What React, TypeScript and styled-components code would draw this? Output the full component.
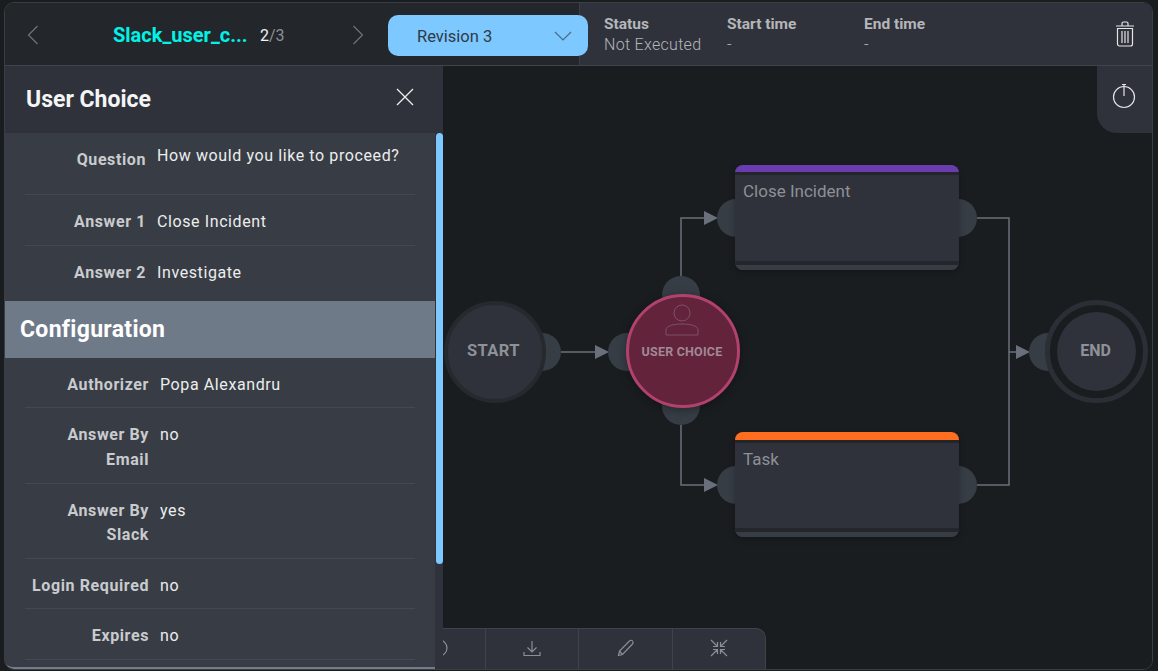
import React from 'react';
import styled, { createGlobalStyle } from 'styled-components';

const GlobalStyle = createGlobalStyle`
    html, body {
        margin: 0;
        padding: 0;
        height: 100%;
        background: #1a1d20;
        overflow: hidden;
        font-family: Roboto, "Liberation Sans", sans-serif;
    }
`;

const Frame = styled.div`
    box-sizing: border-box;
    margin: 2px 0 0 4px;
    width: 1149px;
    height: 668px;
    border: 1px solid #3a3e45;
    border-radius: 10px;
    overflow: hidden;
    display: flex;
    flex-direction: column;
    background: #1a1d20;
`;

const Header = styled.div`
    flex: none;
    display: flex;
    height: 63px;
    box-sizing: border-box;
    border-bottom: 1px solid #3f434b;
`;

const HeaderLeft = styled.div`
    flex: none;
    width: 575px;
    background: #23262b;
    border-right: 1px solid #3a3e45;
    box-sizing: border-box;
    display: flex;
    align-items: center;
    padding: 2px 0 0 22px;
`;

const HeaderRight = styled.div`
    flex: 1;
    background: #2f323a;
    display: flex;
    align-items: flex-start;
    padding: 11px 17px 0 24px;
`;

const Chevron = styled.svg`
    flex: none;
    display: block;
`;

const Pipeline = styled.div`
    flex: none;
    width: 302px;
    display: flex;
    align-items: center;
    margin-left: 11px;
    padding-left: 63px;
    box-sizing: border-box;
    white-space: nowrap;
`;

const PipelineName = styled.span`
    color: #00f3e6;
    font-size: 20px;
    font-weight: 700;
    width: 147px;
`;

const Counter = styled.span`
    color: #8c9096;
    font-size: 16px;
`;

const CounterCurrent = styled.span`
    color: #f2f2f2;
`;

const RevisionButton = styled.div`
    flex: none;
    box-sizing: border-box;
    width: 200px;
    height: 41px;
    margin-left: 24px;
    margin-top: 1px;
    padding: 1px 16px 0 29px;
    border-radius: 10px;
    background: #7cc8ff;
    color: #2f3a45;
    font-size: 16.5px;
    display: flex;
    align-items: center;
    justify-content: space-between;
    position: relative;
    z-index: 2;
`;

const StatusColumn = styled.div<{ $width: number }>`
    width: ${p => p.$width}px;
    display: flex;
    flex-direction: column;
    color: #b4b6ba;
`;

const StatusLabel = styled.span`
    font-size: 15.5px;
    font-weight: 700;
    line-height: 20px;
`;

const StatusValue = styled.span`
    font-size: 16px;
    font-weight: 300;
    line-height: 21px;
    letter-spacing: 0.3px;
`;

const TrashButton = styled.div`
    margin-left: auto;
    margin-top: 7px;
`;

const Main = styled.div`
    flex: 1;
    display: flex;
    min-height: 0;
`;

const Panel = styled.aside`
    flex: none;
    width: 438px;
    display: flex;
    flex-direction: column;
    background: #2f323a;
    position: relative;
    z-index: 3;
`;

const PanelHead = styled.div`
    flex: none;
    height: 67px;
    display: flex;
    align-items: center;
    justify-content: space-between;
    box-sizing: border-box;
    padding: 0 29px 6px 21px;
`;

const PanelTitle = styled.h2`
    margin: 0;
    color: #f4f5f6;
    font-size: 23px;
    font-weight: 700;
    padding-top: 6px;
`;

const PanelScroll = styled.div`
    flex: 1;
    min-height: 0;
    display: flex;
`;

const PanelBody = styled.div`
    width: 430px;
    background: #383d45;
    border-bottom: 2px solid #727c8a;
    border-bottom-left-radius: 8px;
    overflow: hidden;
    box-sizing: border-box;
`;

const ScrollTrack = styled.div`
    flex: 1;
    padding-left: 1px;
`;

const ScrollThumb = styled.div`
    height: 431px;
    background: #7cc8ff;
    border-radius: 4px;
`;

const Row = styled.div<{ $labelWidth: number; $minHeight?: number; $last?: boolean }>`
    display: grid;
    grid-template-columns: ${p => p.$labelWidth}px 1fr;
    column-gap: 11px;
    margin: 0 20px;
    padding: 15px 0 ${p => (p.$last ? 15.5 : 10.2)}px;
    min-height: ${p => p.$minHeight ?? 0}px;
    box-sizing: border-box;
    border-bottom: ${p => (p.$last ? 'none' : '1px solid #434954')};
    font-size: 16px;
    line-height: 24.5px;
    letter-spacing: 0.6px;
`;

const RowLabel = styled.div`
    color: #c9cbce;
    font-weight: 700;
    text-align: right;
`;

const RowValue = styled.div<{ $raised?: boolean }>`
    color: #eceded;
    margin-top: ${p => (p.$raised ? -4 : 0)}px;
`;

const SectionTitle = styled.div`
    height: 57px;
    box-sizing: border-box;
    padding-left: 15px;
    display: flex;
    align-items: center;
    background: #6f7a88;
    color: #ffffff;
    font-size: 23px;
    font-weight: 700;
    letter-spacing: 0.3px;
`;

const Canvas = styled.div`
    flex: 1;
    position: relative;
    overflow: hidden;
    background: #1a1d20;
`;

const Edges = styled.svg`
    position: absolute;
    left: 0;
    top: 0;
`;

// canvas sits at 443,66 on the page, nodes below are placed in page coordinates
const Port = styled.div<{ $x: number; $y: number }>`
    position: absolute;
    left: ${p => p.$x - 19 - 443}px;
    top: ${p => p.$y - 19 - 66}px;
    width: 38px;
    height: 38px;
    border-radius: 50%;
    background: #363d44;
`;

const StartNode = styled.div`
    position: absolute;
    left: ${444 - 443}px;
    top: ${301 - 66}px;
    width: 102px;
    height: 102px;
    box-sizing: border-box;
    border-radius: 50%;
    border: 4px solid #26292e;
    background: #2f323a;
    display: flex;
    align-items: center;
    justify-content: center;
    padding: 0 3px 3px 0;
    color: #8e9198;
    font-size: 16.5px;
    font-weight: 700;
    letter-spacing: 0.4px;
`;

const EndNode = styled.div`
    position: absolute;
    left: ${1045 - 443}px;
    top: ${300 - 66}px;
    width: 103px;
    height: 103px;
    box-sizing: border-box;
    border-radius: 50%;
    border: 5px solid #2b2e34;
    background: #1a1d20;
    display: flex;
    align-items: center;
    justify-content: center;
`;

const EndInner = styled.div`
    width: 79px;
    height: 79px;
    box-sizing: border-box;
    padding: 0 2px 2px 0;
    border-radius: 50%;
    background: #2f323a;
    display: flex;
    align-items: center;
    justify-content: center;
    color: #8e9198;
    font-size: 16px;
    font-weight: 700;
`;

const ChoiceNode = styled.div`
    position: absolute;
    left: ${626 - 443}px;
    top: ${294 - 66}px;
    width: 114px;
    height: 114px;
    box-sizing: border-box;
    border-radius: 50%;
    border: 3px solid #b0426d;
    background: #63233b;
    box-shadow: 0 2px 10px rgba(0, 0, 0, 0.35);
    display: flex;
    flex-direction: column;
    align-items: center;
    padding: 7px 2px 0 0;
    color: #a08a95;
    font-size: 12.5px;
    font-weight: 700;
    letter-spacing: 0.2px;
    white-space: nowrap;
`;

const ChoiceLabel = styled.span`
    margin-top: 9px;
    line-height: 14px;
`;

const TaskCard = styled.div<{ $y: number; $accent: string; $barHeight: number }>`
    position: absolute;
    left: ${735 - 443}px;
    top: ${p => p.$y - 66}px;
    width: 224px;
    height: 105px;
    border-radius: 8px;
    overflow: hidden;
    display: flex;
    flex-direction: column;
    background: #2f323a;
    box-shadow: 0 2px 6px rgba(0, 0, 0, 0.25);
    &::before {
        content: '';
        flex: none;
        height: ${p => p.$barHeight}px;
        background: ${p => p.$accent};
    }
`;

const CardBody = styled.div`
    flex: 1;
    border-top: 3px solid #24252b;
    padding: 5px 8px;
    color: #8d9097;
    font-size: 17px;
    line-height: 22px;
`;

const CardFoot = styled.div`
    flex: none;
    height: 5px;
    border-top: 4px solid #24262b;
    background: #383d45;
`;

const TimerTab = styled.div`
    position: absolute;
    right: 0;
    top: 0;
    width: 55px;
    height: 67px;
    box-sizing: border-box;
    padding: 0 2px 8px 0;
    background: #2f323a;
    border-bottom-left-radius: 20px;
    display: flex;
    align-items: center;
    justify-content: center;
`;

const Toolbar = styled.div`
    position: absolute;
    left: -52px;
    bottom: 0;
    display: flex;
    height: 41px;
    background: #2f323a;
    border: 1px solid #3f434b;
    border-bottom: none;
    border-top-right-radius: 10px;
    box-sizing: border-box;
`;

const ToolButton = styled.div<{ $width: number }>`
    width: ${p => p.$width}px;
    box-sizing: border-box;
    padding-bottom: 2px;
    display: flex;
    align-items: center;
    justify-content: center;
    & + & {
        border-left: 1px solid #3f434b;
    }
`;

const questionRows = [
    { label: 'Question', value: 'How would you like to proceed?', raised: true, minHeight: 62 },
    { label: 'Answer 1', value: 'Close Incident' },
    { label: 'Answer 2', value: 'Investigate', last: true },
];

const configRows = [
    { label: 'Authorizer', value: 'Popa Alexandru' },
    { label: 'Answer By Email', value: 'no' },
    { label: 'Answer By Slack', value: 'yes' },
    { label: 'Login Required', value: 'no' },
    { label: 'Expires', value: 'no' },
];

const Arrow = ({ x, y }: { x: number; y: number }) => (
    <polygon points={`${x},${y - 7} ${x + 14},${y} ${x},${y + 7}`} fill="#6a707b" />
);

const App = () => {
    return (
        <>
            <GlobalStyle />
            <Frame>
                <Header>
                    <HeaderLeft>
                        <Chevron width="12" height="20" viewBox="0 0 12 20" fill="none" stroke="#6f737a" strokeWidth="1.2">
                            <path d="M10.5 1 1.5 10l9 9" />
                        </Chevron>
                        <Pipeline>
                            <PipelineName>Slack_user_c...</PipelineName>
                            <Counter><CounterCurrent>2</CounterCurrent>/3</Counter>
                        </Pipeline>
                        <Chevron width="12" height="20" viewBox="0 0 12 20" fill="none" stroke="#6f737a" strokeWidth="1.2">
                            <path d="M1.5 1l9 9-9 9" />
                        </Chevron>
                        <RevisionButton>
                            Revision 3
                            <Chevron width="18" height="10" viewBox="0 0 18 10" fill="none" stroke="#4a6a85" strokeWidth="1.2">
                                <path d="M1 1l8 8 8-8" />
                            </Chevron>
                        </RevisionButton>
                    </HeaderLeft>
                    <HeaderRight>
                        <StatusColumn $width={123}>
                            <StatusLabel>Status</StatusLabel>
                            <StatusValue>Not Executed</StatusValue>
                        </StatusColumn>
                        <StatusColumn $width={137}>
                            <StatusLabel>Start time</StatusLabel>
                            <StatusValue>-</StatusValue>
                        </StatusColumn>
                        <StatusColumn $width={120}>
                            <StatusLabel>End time</StatusLabel>
                            <StatusValue>-</StatusValue>
                        </StatusColumn>
                        <TrashButton>
                            <svg width="20" height="26" viewBox="0 0 20 26" fill="none" stroke="#e4e5e7" strokeWidth="1.2">
                                <path d="M1 5h18M7 5V2.5C7 1.7 7.6 1 8.5 1h3c.9 0 1.5.7 1.5 1.5V5" />
                                <path d="M2.5 7.5h15V23c0 1.1-.9 2-2 2h-11c-1.1 0-2-.9-2-2z" />
                                <path d="M7 10v12M10 10v12M13 10v12" />
                            </svg>
                        </TrashButton>
                    </HeaderRight>
                </Header>
                <Main>
                    <Panel>
                        <PanelHead>
                            <PanelTitle>User Choice</PanelTitle>
                            <svg width="18" height="18" viewBox="0 0 18 18" fill="none" stroke="#eceded" strokeWidth="1.3">
                                <path d="M1 1l16 16M17 1 1 17" />
                            </svg>
                        </PanelHead>
                        <PanelScroll>
                            <PanelBody>
                                {questionRows.map(row => (
                                    <Row key={row.label} $labelWidth={121} $minHeight={row.minHeight} $last={row.last}>
                                        <RowLabel>{row.label}</RowLabel>
                                        <RowValue $raised={row.raised}>{row.value}</RowValue>
                                    </Row>
                                ))}
                                <SectionTitle>Configuration</SectionTitle>
                                {configRows.map(row => (
                                    <Row key={row.label} $labelWidth={124}>
                                        <RowLabel>{row.label}</RowLabel>
                                        <RowValue>{row.value}</RowValue>
                                    </Row>
                                ))}
                            </PanelBody>
                            <ScrollTrack>
                                <ScrollThumb />
                            </ScrollTrack>
                        </PanelScroll>
                    </Panel>
                    <Canvas>
                        <Edges width="710" height="603" viewBox="443 66 710 603" fill="none" stroke="#6a707b" strokeWidth="1.5">
                            <path d="M561 352H596" />
                            <path d="M681 276V218H705" />
                            <path d="M681 425V485H705" />
                            <path d="M977 218H1009V485H977" />
                            <path d="M1009 352H1016" />
                            <g stroke="none">
                                <Arrow x={595} y={352} />
                                <Arrow x={704} y={218} />
                                <Arrow x={704} y={485} />
                                <Arrow x={1016} y={352} />
                            </g>
                        </Edges>
                        <Port $x={542} $y={352} />
                        <Port $x={627} $y={352} />
                        <Port $x={681} $y={295} />
                        <Port $x={681} $y={406} />
                        <Port $x={736} $y={218} />
                        <Port $x={958} $y={218} />
                        <Port $x={736} $y={485} />
                        <Port $x={958} $y={485} />
                        <Port $x={1048} $y={352} />
                        <StartNode>START</StartNode>
                        <ChoiceNode>
                            <svg width="34" height="32" viewBox="0 0 34 32" fill="none" stroke="#80566a" strokeWidth="0.9">
                                <circle cx="17" cy="9" r="8" />
                                <path d="M1 31v-5c0-4 7-6 16-6s16 2 16 6v5z" />
                            </svg>
                            <ChoiceLabel>USER CHOICE</ChoiceLabel>
                        </ChoiceNode>
                        <TaskCard $y={165} $accent="#6a3cb0" $barHeight={7}>
                            <CardBody>Close Incident</CardBody>
                            <CardFoot />
                        </TaskCard>
                        <TaskCard $y={432} $accent="#ff6d1f" $barHeight={8}>
                            <CardBody>Task</CardBody>
                            <CardFoot />
                        </TaskCard>
                        <EndNode>
                            <EndInner>END</EndInner>
                        </EndNode>
                        <TimerTab>
                            <svg width="24" height="26" viewBox="0 0 24 26" fill="none" stroke="#e4e5e7" strokeWidth="1.2">
                                <circle cx="12" cy="14" r="10.500" />
                                <path d="M12 1v12M10 1.500h4" />
                            </svg>
                        </TimerTab>
                        <Toolbar>
                            <ToolButton $width={93}>
                                <svg width="18" height="18" viewBox="0 0 18 18" fill="none" stroke="#8a8e95" strokeWidth="1.2">
                                    <circle cx="9" cy="9" r="8" />
                                </svg>
                            </ToolButton>
                            <ToolButton $width={93}>
                                <svg width="18" height="17" viewBox="0 0 18 17" fill="none" stroke="#8a8e95" strokeWidth="1.2">
                                    <path d="M9 1v11M4.500 7.500 9 12l4.500-4.500M1 12v3.500h16V12" />
                                </svg>
                            </ToolButton>
                            <ToolButton $width={94}>
                                <svg width="18" height="18" viewBox="0 0 18 18" fill="none" stroke="#8a8e95" strokeWidth="1.2">
                                    <path d="M1.500 16.500l1-4.500L12.500 2c1-1 2.200-1 3 0s1 2 0 3L5.500 15.500z" />
                                    <path d="M2.500 12l3 3.500" />
                                </svg>
                            </ToolButton>
                            <ToolButton $width={93}>
                                <svg width="18" height="18" viewBox="0 0 18 18" fill="none" stroke="#8a8e95" strokeWidth="1.2">
                                    <path d="M1 1l6 6M3 7.500h4.500V3M17 1l-6 6M15 7.500h-4.500V3M1 17l6-6M3 10.500h4.500V15M17 17l-6-6M15 10.500h-4.500V15" />
                                </svg>
                            </ToolButton>
                        </Toolbar>
                    </Canvas>
                </Main>
            </Frame>
        </>
    );
};

export default App;
